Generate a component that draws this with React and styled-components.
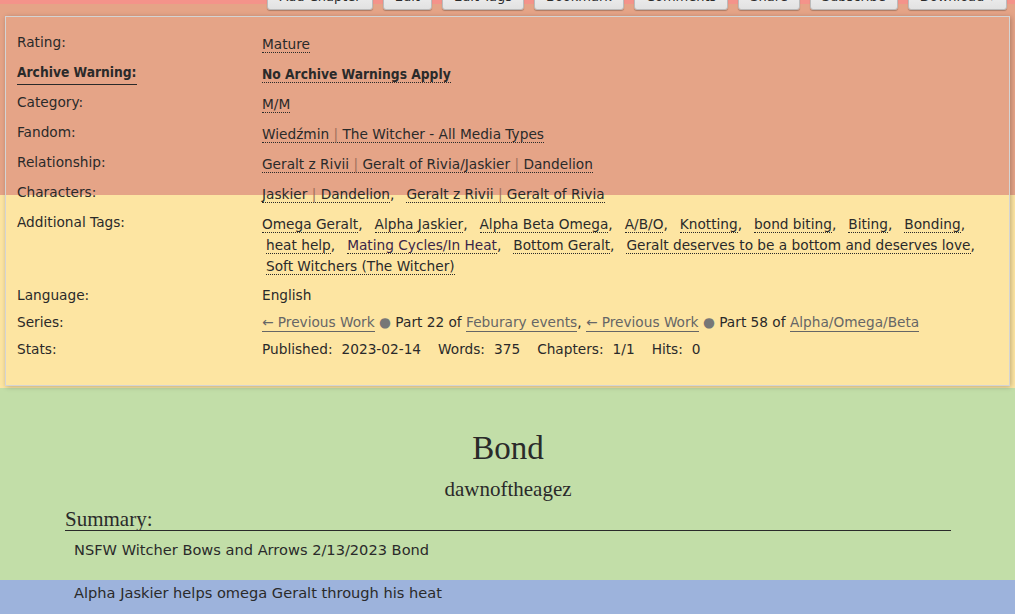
import React from 'react';
import styled, { createGlobalStyle } from 'styled-components';

const GlobalStyle = createGlobalStyle`
  html, body {
    margin: 0;
    padding: 0;
  }
  body {
    font-family: "DejaVu Sans", Verdana, sans-serif;
    font-size: 13.7px;
    color: #2a2a2a;
    overflow: hidden;
  }
`;

const actions = ['Add Chapter', 'Edit', 'Edit Tags', 'Bookmark', 'Comments', 'Share', 'Subscribe', 'Download ▾'];

const fandoms = [['Wiedźmin', 'The Witcher - All Media Types']];
const relationships = [['Geralt z Rivii', 'Geralt of Rivia/Jaskier', 'Dandelion']];
const characters = [
  ['Jaskier', 'Dandelion'],
  ['Geralt z Rivii', 'Geralt of Rivia'],
];
const freeforms = [
  'Omega Geralt',
  'Alpha Jaskier',
  'Alpha Beta Omega',
  'A/B/O',
  'Knotting',
  'bond biting',
  'Biting',
  'Bonding',
  'heat help',
  'Mating Cycles/In Heat',
  'Bottom Geralt',
  'Geralt deserves to be a bottom and deserves love',
  'Soft Witchers (The Witcher)',
];

const stats = [
  ['Published:', '2023-02-14'],
  ['Words:', '375'],
  ['Chapters:', '1/1'],
  ['Hits:', '0'],
];

function PipedTag({ parts }) {
  return (
    <Tag>
      {parts.map((p, i) => (
        <React.Fragment key={p}>
          {i > 0 && <Pipe> | </Pipe>}
          {p}
        </React.Fragment>
      ))}
    </Tag>
  );
}

function TagList({ tags }) {
  return (
    <Commas>
      {tags.map((t, i) => (
        <TagItem key={i}>
          {Array.isArray(t) ? <PipedTag parts={t} /> : <Tag $visited={t.startsWith('Mating')}>{t}</Tag>}
          {i < tags.length - 1 && ','}
        </TagItem>
      ))}
    </Commas>
  );
}

export default function App() {
  return (
    <Page>
      <GlobalStyle />
      <ActionBar>
        {actions.map((a) => (
          <ActionButton key={a}>{a}</ActionButton>
        ))}
      </ActionBar>

      <MetaBox>
        <Row>
          <Label>Rating:</Label>
          <Value><TagList tags={['Mature']} /></Value>
        </Row>
        <Row>
          <Label $strong>Archive Warning:</Label>
          <Value $strong><TagList tags={['No Archive Warnings Apply']} /></Value>
        </Row>
        <Row>
          <Label>Category:</Label>
          <Value><TagList tags={['M/M']} /></Value>
        </Row>
        <Row>
          <Label>Fandom:</Label>
          <Value><TagList tags={fandoms} /></Value>
        </Row>
        <Row>
          <Label>Relationship:</Label>
          <Value><TagList tags={relationships} /></Value>
        </Row>
        <Row>
          <Label>Characters:</Label>
          <Value><TagList tags={characters} /></Value>
        </Row>
        <Row>
          <Label>Additional Tags:</Label>
          <Value><TagList tags={freeforms} /></Value>
        </Row>
        <Row>
          <Label $plain>Language:</Label>
          <Value $plain>English</Value>
        </Row>
        <Row>
          <Label $plain>Series:</Label>
          <Value $plain>
            <SeriesLink>← Previous Work</SeriesLink> <Dot>●</Dot> Part 22 of{' '}
            <SeriesLink>Feburary events</SeriesLink>, <SeriesLink>← Previous Work</SeriesLink>{' '}
            <Dot>●</Dot> Part 58 of <SeriesLink>Alpha/Omega/Beta</SeriesLink>
          </Value>
        </Row>
        <Row>
          <Label $plain>Stats:</Label>
          <Value $plain>
            {stats.map(([k, v]) => (
              <Stat key={k}>
                <StatKey>{k}</StatKey>
                {v}
              </Stat>
            ))}
          </Value>
        </Row>
      </MetaBox>

      <Preface>
        <Title>Bond</Title>
        <Byline>dawnoftheagez</Byline>
        <SummaryHeading>Summary:</SummaryHeading>
        <Summary>
          <p>NSFW Witcher Bows and Arrows 2/13/2023 Bond</p>
          <p>Alpha Jaskier helps omega Geralt through his heat</p>
        </Summary>
      </Preface>
    </Page>
  );
}

const Page = styled.div`
  min-height: 614px;
  background: linear-gradient(
    to bottom,
    #f4938a 0,
    #f4938a 4px,
    #e5a487 4px,
    #e5a487 195px,
    #fde5a2 195px,
    #fde5a2 388px,
    #c2dea8 388px,
    #c2dea8 580px,
    #9db3dc 580px
  );
  overflow: hidden;
`;

const ActionBar = styled.ul`
  display: flex;
  justify-content: flex-end;
  gap: 10px;
  list-style: none;
  margin: -14px 0 0;
  padding: 0 8px 0 0;
  font-size: 13px;
`;

const ActionButton = styled.li`
  height: 22px;
  line-height: 20px;
  padding: 0 11px;
  border: 1px solid #bbb;
  border-radius: 0 0 3px 3px;
  background: linear-gradient(#f4f4f4, #e2e2e2);
  box-shadow: 0 1px 1px rgba(0, 0, 0, 0.25);
  color: #2a2a2a;
  white-space: nowrap;
`;

const MetaBox = styled.dl`
  margin: 6px 5px 0;
  padding: 17px 11px 27px;
  border: 1px solid #d4d4d4;
  box-shadow: 1px 1px 5px rgba(0, 0, 0, 0.25);
`;

const Row = styled.div`
  display: grid;
  grid-template-columns: 245px 1fr;
  margin-bottom: 9px;

  &:last-child {
    margin-bottom: 0;
  }
`;

const Label = styled.dt`
  margin: 0;
  line-height: ${(p) => (p.$plain ? '18px' : '17px')};

  ${(p) =>
    p.$strong &&
    `
    justify-self: start;
    height: 20px;
    font-family: "DejaVu Sans Condensed", "DejaVu Sans", sans-serif;
    font-weight: bold;
    border-bottom: 1px solid #2a2a2a;
  `}
`;

const Value = styled.dd`
  margin: 0;
  line-height: ${(p) => (p.$plain ? '18px' : '21px')};

  ${(p) =>
    p.$strong &&
    `
    font-family: "DejaVu Sans Condensed", "DejaVu Sans", sans-serif;
    font-weight: bold;
  `}
`;

const Commas = styled.ul`
  list-style: none;
  margin: 0;
  padding: 0 0 0 4px;
  text-indent: -4px;
`;

const TagItem = styled.li`
  display: inline-block;
  text-indent: 0;
  white-space: nowrap;
  margin-right: 12px;

  &:last-child {
    margin-right: 0;
  }
`;

const Tag = styled.a`
  color: ${(p) => (p.$visited ? '#3a2548' : '#2a2a2a')};
  text-decoration: none;
  border-bottom: 1px dotted #2a2a2a;
`;

const Pipe = styled.span`
  color: #a0705c;
`;

const SeriesLink = styled.a`
  color: #666;
  text-decoration: none;
  border-bottom: 1px solid #666;
  padding-bottom: 1px;
`;

const Dot = styled.span`
  color: #777;
`;

const Stat = styled.span`
  margin-right: 17px;

  &:last-child {
    margin-right: 0;
  }
`;

const StatKey = styled.span`
  margin-right: 9px;
`;

const Preface = styled.div`
  padding: 42px 64px 0 65px;
`;

const Title = styled.h2`
  margin: 0;
  text-align: center;
  font-family: "Liberation Serif", "Times New Roman", serif;
  font-size: 33px;
  font-weight: normal;
  line-height: 40px;
`;

const Byline = styled.h3`
  margin: 6px 0 0;
  text-align: center;
  font-family: "Liberation Serif", "Times New Roman", serif;
  font-size: 21px;
  font-weight: normal;
  line-height: 30px;
`;

const SummaryHeading = styled.h3`
  margin: 4px 0 0;
  font-family: "Liberation Serif", "Times New Roman", serif;
  font-size: 21px;
  font-weight: normal;
  line-height: 22px;
  border-bottom: 1px solid #2a2a2a;
`;

const Summary = styled.blockquote`
  margin: 10px 0 0 9px;
  font-size: 14.6px;

  p {
    margin: 0 0 25px;
    line-height: 18px;
  }
`;
